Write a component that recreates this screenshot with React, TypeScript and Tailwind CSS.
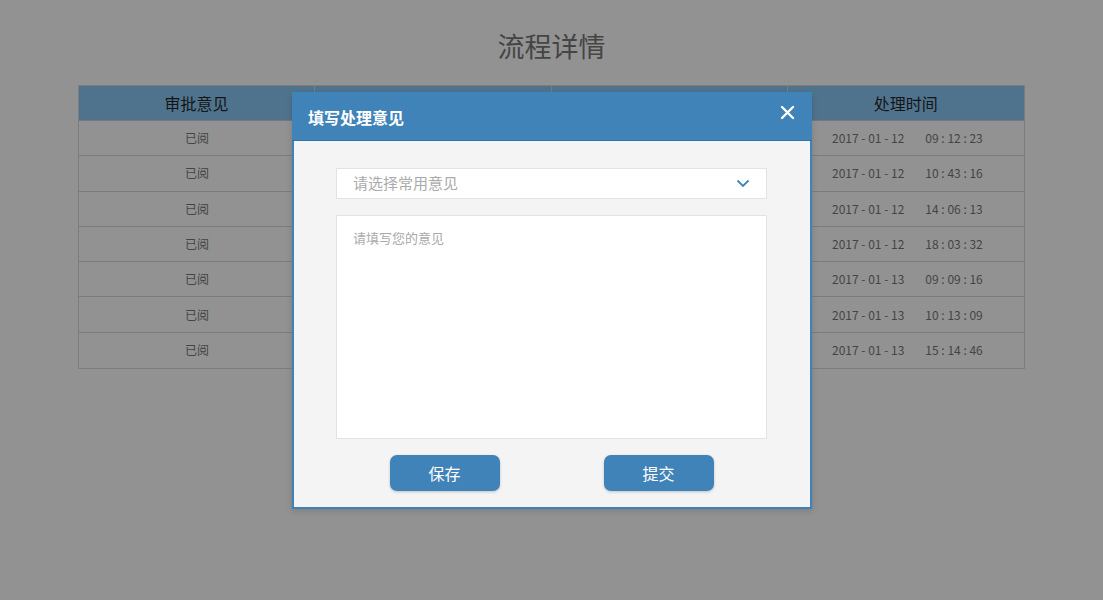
import React from "react";

const rows = [
  ["2017 - 01 - 12", "09 : 12 : 23"],
  ["2017 - 01 - 12", "10 : 43 : 16"],
  ["2017 - 01 - 12", "14 : 06 : 13"],
  ["2017 - 01 - 12", "18 : 03 : 32"],
  ["2017 - 01 - 13", "09 : 09 : 16"],
  ["2017 - 01 - 13", "10 : 13 : 09"],
  ["2017 - 01 - 13", "15 : 14 : 46"],
];

export default function App() {
  return (
    <div
      className="relative w-[1103px] h-[600px] bg-[#929292] overflow-hidden"
      style={{ fontFamily: '"Noto Sans CJK SC", "Noto Sans", sans-serif' }}
    >
      <div className="flex flex-col items-center pt-[26px]">
        <h1 className="text-[27px] leading-[40px] text-[#454545]">流程详情</h1>
        <div className="mt-[19px] w-[947px] border border-[#7d7d7d]">
          <div className="grid grid-cols-4 h-[35px] bg-[#50738d] border-b border-[#6f7b84]">
            <div className="flex items-center justify-center text-[16px] text-[#151515] border-r border-[#6f7f8c]">审批意见</div>
            <div className="border-r border-[#6f7f8c]"></div>
            <div className="border-r border-[#6f7f8c]"></div>
            <div className="flex items-center justify-center text-[16px] text-[#151515]">处理时间</div>
          </div>
          {rows.map((r, i) => (
            <div
              key={i}
              className={`grid grid-cols-4 h-[35.3px] ${i < rows.length - 1 ? "border-b border-[#7b7b7b]" : ""}`}
            >
              <div className="flex items-center justify-center text-[12px] text-[#444]">已阅</div>
              <div></div>
              <div></div>
              <div className="flex items-center justify-center pl-[3px] text-[12px] text-[#444] whitespace-pre">
                <span>{r[0]}</span>
                <span className="ml-[21px]">{r[1]}</span>
              </div>
            </div>
          ))}
        </div>
      </div>

      <div className="absolute left-[292px] top-[92px] w-[520px] border-2 border-t-0 border-[#3d82b8] bg-[#f4f4f4] shadow-[0_2px_6px_rgba(0,0,0,0.15)]">
        <div className="-mx-[2px] flex items-center justify-between h-[49px] bg-[#3f83b9] pl-[16px] pr-[17px] border-b border-[#2f74ab]">
          <span className="text-[16px] font-bold text-white mt-[1px]">填写处理意见</span>
          <svg width="15" height="15" viewBox="0 0 15 15" className="-mt-[8px]">
            <path d="M2 2 L13 13 M13 2 L2 13" stroke="white" strokeWidth="2.4" strokeLinecap="round" />
          </svg>
        </div>
        <div className="flex flex-col pl-[42px] pr-[43px] pt-[27px] pb-[16px]">
          <div className="flex items-center justify-between h-[31px] bg-white border border-[#e3e3e3] pl-[16px] pr-[16px]">
            <span className="text-[15px] text-[#aaaaaa]">请选择常用意见</span>
            <svg width="14" height="9" viewBox="0 0 14 9">
              <path d="M1.5 1.5 L7 7 L12.5 1.5" stroke="#3f83b9" strokeWidth="1.8" fill="none" />
            </svg>
          </div>
          <div className="mt-[16px] h-[224px] bg-white border border-[#e3e3e3] px-[16px] pt-[8px]">
            <span className="text-[13px] text-[#aaaaaa]">请填写您的意见</span>
          </div>
          <div className="mt-[16px] flex justify-center gap-[104px]">
            <button className="w-[110px] h-[36px] rounded-[7px] bg-[#3f83b9] text-white text-[16px] shadow-[0_1px_3px_rgba(0,0,0,0.2)]">保存</button>
            <button className="w-[110px] h-[36px] rounded-[7px] bg-[#3f83b9] text-white text-[16px] shadow-[0_1px_3px_rgba(0,0,0,0.2)]">提交</button>
          </div>
        </div>
      </div>
    </div>
  );
}
